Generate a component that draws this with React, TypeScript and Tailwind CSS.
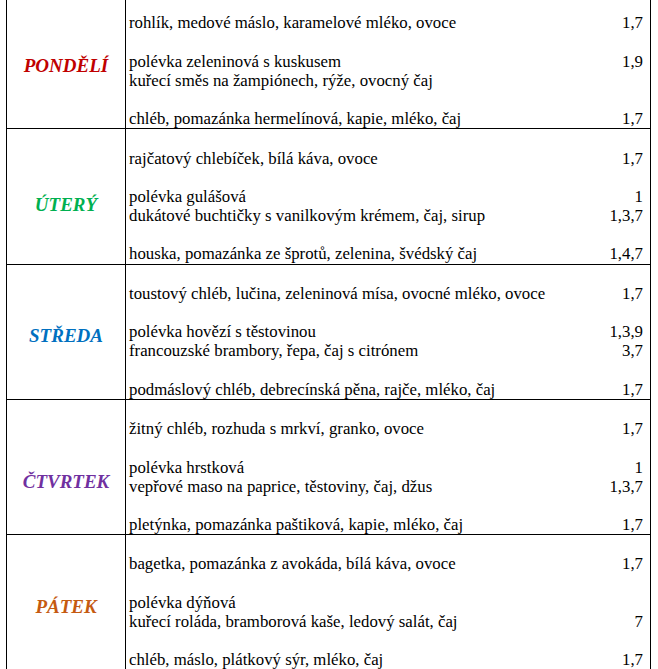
import React from "react";

type Line = [string, string] | null;

interface Day {
  name: string;
  color: string;
  offset: string;
  lines: Line[];
}

const days: Day[] = [
  {
    name: "PONDĚLÍ",
    color: "text-[#c00000]",
    offset: "pt-[11px]",
    lines: [
      null,
      ["rohlík, medové máslo, karamelové mléko, ovoce", "1,7"],
      null,
      ["polévka zeleninová s kuskusem", "1,9"],
      ["kuřecí směs na žampiónech, rýže, ovocný čaj", ""],
      null,
      ["chléb, pomazánka hermelínová, kapie, mléko, čaj", "1,7"],
    ],
  },
  {
    name: "ÚTERÝ",
    color: "text-[#00b050]",
    offset: "pt-[17px]",
    lines: [
      null,
      ["rajčatový chlebíček, bílá káva, ovoce", "1,7"],
      null,
      ["polévka gulášová", "1"],
      ["dukátové buchtičky s vanilkovým krémem, čaj, sirup", "1,3,7"],
      null,
      ["houska, pomazánka ze šprotů, zelenina, švédský čaj", "1,4,7"],
    ],
  },
  {
    name: "STŘEDA",
    color: "text-[#0070c0]",
    offset: "pt-[8px]",
    lines: [
      null,
      ["toustový chléb, lučina, zeleninová mísa, ovocné mléko, ovoce", "1,7"],
      null,
      ["polévka hovězí s těstovinou", "1,3,9"],
      ["francouzské brambory, řepa, čaj s citrónem", "3,7"],
      null,
      ["podmáslový chléb, debrecínská pěna, rajče, mléko, čaj", "1,7"],
    ],
  },
  {
    name: "ČTVRTEK",
    color: "text-[#7030a0]",
    offset: "pt-[30px]",
    lines: [
      null,
      ["žitný chléb, rozhuda s mrkví, granko, ovoce", "1,7"],
      null,
      ["polévka hrstková", "1"],
      ["vepřové maso na paprice, těstoviny, čaj, džus", "1,3,7"],
      null,
      ["pletýnka, pomazánka paštiková, kapie, mléko, čaj", "1,7"],
    ],
  },
  {
    name: "PÁTEK",
    color: "text-[#c55a11]",
    offset: "pt-[10px]",
    lines: [
      null,
      ["bagetka, pomazánka z avokáda, bílá káva, ovoce", "1,7"],
      null,
      ["polévka dýňová", ""],
      ["kuřecí roláda, bramborová kaše, ledový salát, čaj", "7"],
      null,
      ["chléb, máslo, plátkový sýr, mléko, čaj", "1,7"],
    ],
  },
];

const App: React.FC = () => {
  return (
    <div className="h-screen overflow-hidden bg-white text-black font-serif">
      <div className="-mt-[6px] ml-[6px] w-[645px] border-l border-r border-black [font-family:'Liberation_Serif','Times_New_Roman',serif]">
        {days.map((day) => (
          <div key={day.name} className="flex border-b border-black">
            <div
              className={`w-[119px] shrink-0 border-r border-black flex items-center justify-center ${day.offset}`}
            >
              <span className={`text-[19px] font-bold italic ${day.color}`}>
                {day.name}
              </span>
            </div>
            <div className="flex-1 pl-[3px] pr-[7px] text-[16.8px] leading-[19.2px]">
              {day.lines.map((line, i) =>
                line ? (
                  <div key={i} className="flex justify-between h-[19.2px] whitespace-nowrap">
                    <span>{line[0]}</span>
                    <span>{line[1]}</span>
                  </div>
                ) : (
                  <div key={i} className="h-[19.2px]" />
                )
              )}
            </div>
          </div>
        ))}
      </div>
    </div>
  );
};

export default App;
